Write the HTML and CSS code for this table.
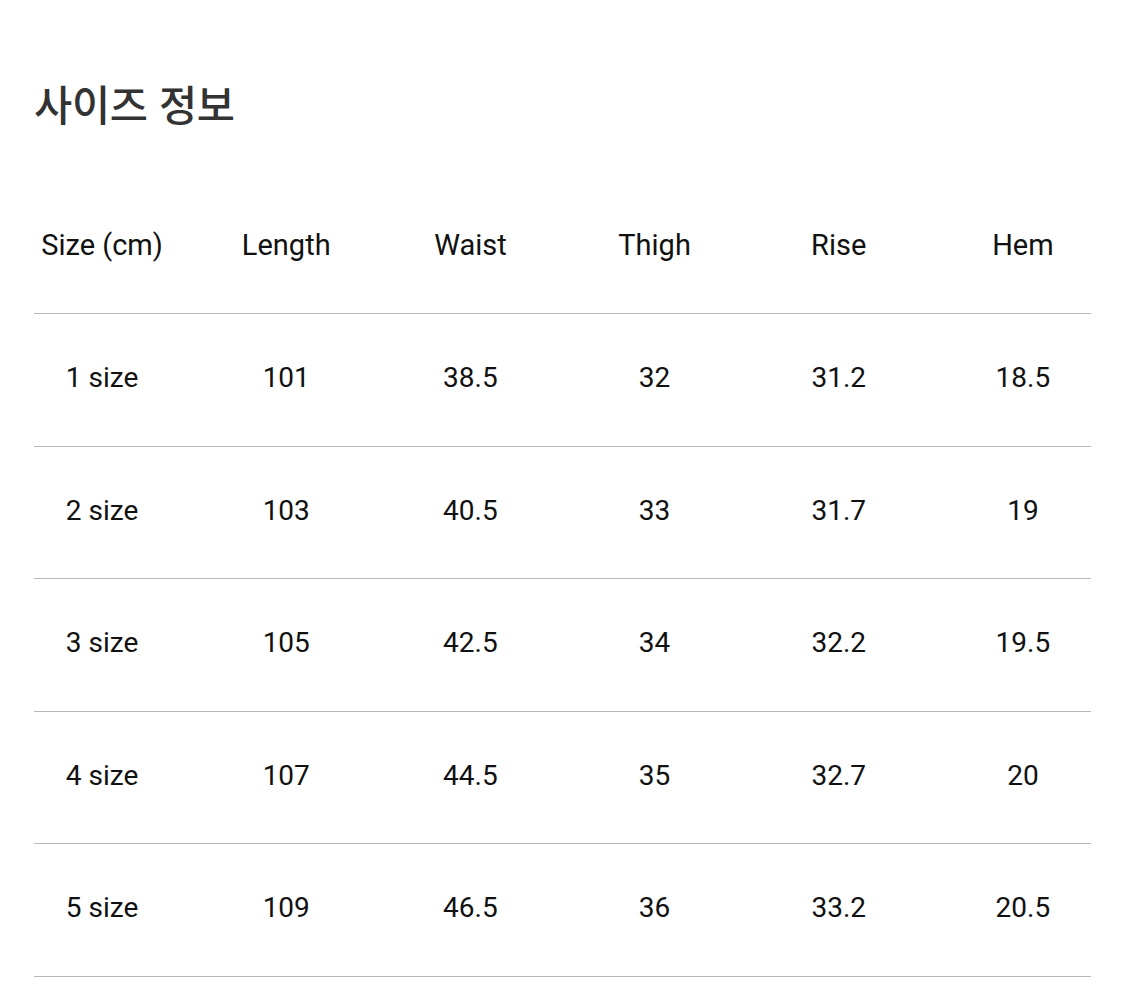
FILE: index.html
```html
<!DOCTYPE html>
<html lang="ko">
<head>
<meta charset="utf-8">
<title>사이즈 정보</title>
<link rel="stylesheet" href="styles.css">
</head>
<body>
<main class="page">
  <h1 class="title">사이즈 정보</h1>
  <div class="size-table">
    <div class="row head">
      <div class="cells">
        <span>Size (cm)</span><span>Length</span><span>Waist</span><span>Thigh</span><span>Rise</span><span>Hem</span>
      </div>
    </div>
    <div class="row">
      <div class="cells">
        <span>1 size</span><span>101</span><span>38.5</span><span>32</span><span>31.2</span><span>18.5</span>
      </div>
    </div>
    <div class="row">
      <div class="cells">
        <span>2 size</span><span>103</span><span>40.5</span><span>33</span><span>31.7</span><span>19</span>
      </div>
    </div>
    <div class="row">
      <div class="cells">
        <span>3 size</span><span>105</span><span>42.5</span><span>34</span><span>32.2</span><span>19.5</span>
      </div>
    </div>
    <div class="row">
      <div class="cells">
        <span>4 size</span><span>107</span><span>44.5</span><span>35</span><span>32.7</span><span>20</span>
      </div>
    </div>
    <div class="row">
      <div class="cells">
        <span>5 size</span><span>109</span><span>46.5</span><span>36</span><span>33.2</span><span>20.5</span>
      </div>
    </div>
  </div>
</main>
</body>
</html>
```
FILE: styles.css
```css
html, body {
  margin: 0;
  padding: 0;
  background: #ffffff;
}

body {
  font-family: Roboto, "Noto Sans CJK KR", sans-serif;
  color: #111111;
}

.page {
  padding: 77px 34px 0 34px;
}

.title {
  margin: 0;
  height: 53px;
  font-family: "Noto Sans CJK KR", sans-serif;
  font-size: 41.5px;
  font-weight: 500;
  line-height: 53px;
  color: #333333;
  letter-spacing: -0.3px;
}

.size-table {
  margin-top: 46px;
}

.row {
  box-sizing: border-box;
  height: 132.5px;
  padding-bottom: 3px;
  border-bottom: 1px solid #b9b9b9;
  display: flex;
  align-items: center;
}

.row.head {
  height: 138px;
  padding-bottom: 0;
}

.cells {
  flex: 1;
  margin: 0 -24px;
  display: grid;
  grid-template-columns: repeat(6, 1fr);
  text-align: center;
  font-size: 28px;
  line-height: 36px;
}

.head .cells {
  font-size: 29px;
}
```
